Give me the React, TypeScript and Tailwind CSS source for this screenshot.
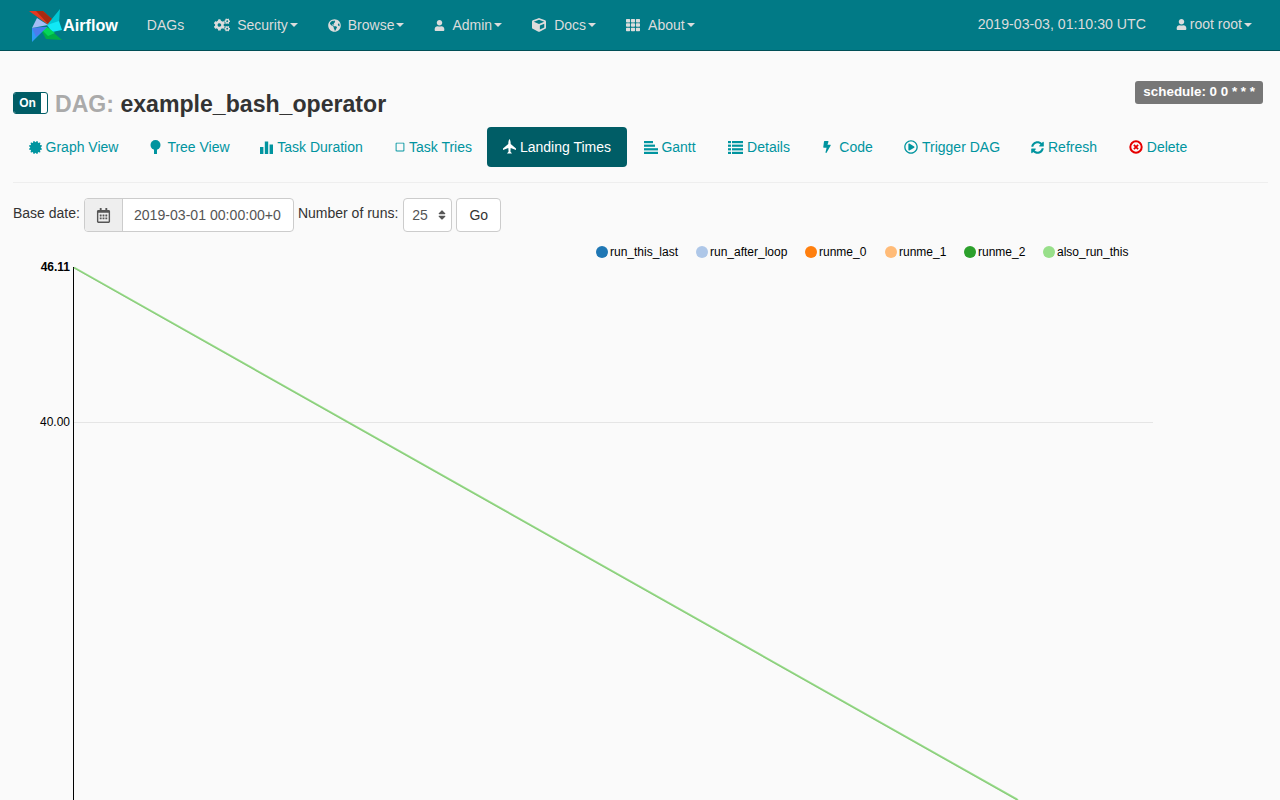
import type { ReactNode } from 'react'
import {
  FaBolt,
  FaCertificate,
  FaCogs,
  FaCube,
  FaGlobeAmericas,
  FaRegCalendarAlt,
  FaRegPlayCircle,
  FaRegSquare,
  FaSort,
  FaSyncAlt,
  FaTh,
  FaUser,
} from 'react-icons/fa'

const legend = [
  { label: 'run_this_last', color: '#1f77b4', x: 602, tx: 610 },
  { label: 'run_after_loop', color: '#aec7e8', x: 702, tx: 710 },
  { label: 'runme_0', color: '#ff7f0e', x: 811, tx: 819 },
  { label: 'runme_1', color: '#ffbb78', x: 891, tx: 899 },
  { label: 'runme_2', color: '#2ca02c', x: 970, tx: 978 },
  { label: 'also_run_this', color: '#98df8a', x: 1049, tx: 1057 },
]

function Logo() {
  return (
    <svg width="34" height="34" viewBox="0 0 34 34" className="shrink-0">
      <g transform="translate(-29,-8)">
        <path d="M29 11 L43 11 L53 20 L50 26 Z" fill="#e43921" />
        <path d="M36 11 L43 11 L53 20 L50 26 Z" fill="#a92a10" />
        <path d="M60 9 L59 23 L47 25 Z" fill="#00c7d4" />
        <path d="M59 21 L62 30 L52 32 L47 25 Z" fill="#11e8f5" />
        <path d="M62 40 L46 39 L40 28 L47 27 Z" fill="#00ad46" />
        <path d="M47 27 L55 33 L48 36 L41 29 Z" fill="#04d659" />
        <path d="M32 42 L32 28 L47 27 Z" fill="#2b9cf5" />
        <path d="M32 28 L47 27 L36 37 Z" fill="#4a7dee" />
        <path d="M37 18 L48 25 L32 28 Z" fill="#a4bdf5" />
      </g>
    </svg>
  )
}

function Caret() {
  return <span className="ml-[2px] h-0 w-0 border-x-[4px] border-t-[4px] border-x-transparent border-t-[#dcdcdc]" />
}

function NavItem({ icon, iconBox, label }: { icon: ReactNode; iconBox: string; label: string }) {
  return (
    <span className="flex items-center text-[14px] text-[#dcdcdc]">
      <span className={`flex items-center ${iconBox}`}>{icon}</span>
      {label}
      <Caret />
    </span>
  )
}

function Tab({ icon, label, active, w }: { icon: ReactNode; label: string; active?: boolean; w: string }) {
  return (
    <span
      className={`flex h-[40px] items-center justify-center rounded text-[14px] ${w} ${
        active ? 'bg-[#005d66] text-white' : 'text-[#00949f]'
      }`}
    >
      <span className="mr-[4px] flex justify-center text-[13px]">{icon}</span>
      {label}
    </span>
  )
}

function TreeIcon() {
  return (
    <svg width="13" height="14" viewBox="0 0 13 14" fill="currentColor" className="ml-[2px] mr-[1px]">
      <circle cx="6.5" cy="5" r="5" />
      <rect x="5" y="8" width="3" height="6" />
    </svg>
  )
}

function BarsIcon() {
  return (
    <svg width="13" height="13" viewBox="0 0 13 13" fill="currentColor">
      <rect x="0" y="6" width="3.4" height="7" />
      <rect x="4.8" y="0.5" width="3.4" height="12.5" />
      <rect x="9.6" y="3.5" width="3.4" height="9.5" />
    </svg>
  )
}

function PlaneIcon() {
  return (
    <svg width="13" height="15" viewBox="0 0 13 15" fill="currentColor" className="mb-[2px]">
      <path d="M6.5 0 C7.4 1 7.7 3 7.7 5 L13 9.5 V11 L7.7 9 L7.4 12.5 L9 14.5 H4 L5.6 12.5 L5.3 9 L0 11 V9.5 L5.3 5 C5.3 3 5.6 1 6.5 0 Z" />
    </svg>
  )
}

function GanttIcon() {
  return (
    <svg width="14" height="13" viewBox="0 0 14 13" fill="currentColor" className="mr-[-1px]">
      <rect x="0" y="0" width="9" height="2.2" />
      <rect x="0" y="3.6" width="11" height="2.2" />
      <rect x="0" y="7.2" width="14" height="2.2" />
      <rect x="0" y="10.8" width="14" height="2.2" />
    </svg>
  )
}

function DetailsIcon() {
  return (
    <svg width="15" height="13" viewBox="0 0 15 13" fill="currentColor">
      {[0, 3.6, 7.2, 10.8].map((y) => (
        <g key={y}>
          <rect x="0" y={y} width="3" height="2.2" />
          <rect x="4" y={y} width="11" height="2.2" />
        </g>
      ))}
    </svg>
  )
}

function DeleteIcon() {
  return (
    <svg width="14" height="14" viewBox="0 0 14 14" fill="none" stroke="#e60000">
      <circle cx="7" cy="7" r="5.7" strokeWidth="2" />
      <path d="M4.9 4.9 L9.1 9.1 M9.1 4.9 L4.9 9.1" strokeWidth="1.8" />
    </svg>
  )
}

export default function App() {
  return (
    <div className="flex h-screen flex-col overflow-hidden bg-[#fafafa] font-['Liberation_Sans',Arial,sans-serif] text-[14px] text-[#333]">
      <nav className="flex h-[51px] shrink-0 items-center border-b border-[#004f57] bg-[#017a86] pl-[29px] pr-[28px]">
        <Logo />
        <span className="text-[16.2px] font-bold text-white">Airflow</span>
        <span className="ml-[29px] mr-[30px] text-[14px] text-[#dcdcdc]">DAGs</span>
        <div className="flex items-center gap-[30px]">
          <NavItem iconBox="w-[23px]" icon={<FaCogs className="text-[16px]" />} label="Security" />
          <NavItem iconBox="w-[20px]" icon={<FaGlobeAmericas className="text-[13px]" />} label="Browse" />
          <NavItem iconBox="w-[18px]" icon={<FaUser className="text-[11px]" />} label="Admin" />
          <NavItem iconBox="w-[22px]" icon={<FaCube className="text-[14px]" />} label="Docs" />
          <NavItem iconBox="w-[22px]" icon={<FaTh className="text-[14px]" />} label="About" />
        </div>
        <div className="ml-auto flex items-center gap-[30px]">
          <span className="text-[14.15px] text-[#dcdcdc]">2019-03-03, 01:10:30 UTC</span>
          <span className="flex items-center text-[14px] text-[#dcdcdc]">
            <span className="flex w-[14px] items-center">
              <FaUser className="text-[11px]" />
            </span>
            root root
            <Caret />
          </span>
        </div>
      </nav>

      <main className="flex min-h-0 flex-1 flex-col pl-[13px] pr-[12px]">
        <div className="relative mt-[28px] flex h-[39px] shrink-0 items-end pt-[29px]">
          <div className="mb-[4px] flex h-[22px] w-[35px] overflow-hidden rounded-[3px] border border-[#005d66] bg-white">
            <span className="flex w-[27px] items-center justify-center bg-[#005d66] text-[12px] font-bold text-white">
              On
            </span>
          </div>
          <h4 className="mb-[1px] ml-[7px] text-[23.1px] font-bold leading-[26px]">
            <span className="text-[#aaa]">DAG:</span> example_bash_operator
          </h4>
          <span className="absolute right-[5px] top-[2px] flex h-[23px] items-center rounded-[3px] bg-[#777] px-[8px] text-[13.4px] font-bold text-white">
            schedule: 0 0 * * *
          </span>
        </div>

        <div className="mt-[9px] flex h-[56px] shrink-0 items-start border-b border-[#eee]">
          <Tab w="w-[121px]" icon={<FaCertificate />} label="Graph View" />
          <Tab w="w-[109px]" icon={<TreeIcon />} label="Tree View" />
          <Tab w="w-[137px]" icon={<BarsIcon />} label="Task Duration" />
          <Tab w="w-[107px]" icon={<FaRegSquare className="text-[10px]" />} label="Task Tries" />
          <Tab w="w-[140px]" icon={<PlaneIcon />} label="Landing Times" active />
          <Tab w="w-[86px]" icon={<GanttIcon />} label="Gantt" />
          <Tab w="w-[92px]" icon={<DetailsIcon />} label="Details" />
          <Tab w="w-[84px]" icon={<FaBolt className="mr-[2px] text-[12px]" />} label="Code" />
          <Tab w="w-[126px]" icon={<FaRegPlayCircle className="text-[14px]" />} label="Trigger DAG" />
          <Tab w="w-[98px]" icon={<FaSyncAlt />} label="Refresh" />
          <Tab w="w-[90px]" icon={<DeleteIcon />} label="Delete" />
        </div>

        <div className="mt-[15px] flex h-[34px] shrink-0 items-center">
          <span className="mb-[3px] mr-[4px]">Base date:</span>
          <div className="flex h-[34px] w-[210px] overflow-hidden rounded border border-[#ccc] bg-white">
            <span className="flex w-[38px] shrink-0 items-center justify-center border-r border-[#ccc] bg-[#eee] text-[15px] text-[#555]">
              <FaRegCalendarAlt />
            </span>
            <span className="min-w-0 flex-1 pl-[11px] pr-[12px]">
              <span className="block overflow-hidden whitespace-nowrap text-[14.1px] leading-[32px] text-[#555]">
                2019-03-01 00:00:00+0
              </span>
            </span>
          </div>
          <span className="mb-[3px] ml-[4px] mr-[5px]">Number of runs:</span>
          <div className="flex h-[34px] w-[49px] items-center justify-between rounded border border-[#ccc] bg-white pl-[8px] pr-[3px] text-[#555]">
            25
            <FaSort className="text-[12px]" />
          </div>
          <span className="ml-[4px] flex h-[34px] w-[45px] items-center justify-center rounded border border-[#ccc] bg-white text-[#333]">
            Go
          </span>
        </div>

        <svg viewBox="0 0 1280 565" className="ml-[-13px] mt-[3px] h-[565px] w-[1280px] shrink-0">
          <g transform="translate(0,-235)" fontFamily="Liberation Sans, Arial, sans-serif" fontSize="12">
            {legend.map((l) => (
              <g key={l.label}>
                <circle cx={l.x} cy="252" r="6" fill={l.color} />
                <text x={l.tx} y="256" fill="#000">
                  {l.label}
                </text>
              </g>
            ))}
            <line x1="74" y1="422.5" x2="1153" y2="422.5" stroke="#e5e5e5" />
            <line x1="73.5" y1="267" x2="73.5" y2="800" stroke="#000" />
            <text x="70" y="271" textAnchor="end" fontWeight="bold" fill="#000">
              46.11
            </text>
            <text x="70" y="426" textAnchor="end" fill="#000">
              40.00
            </text>
            <line x1="74" y1="267.5" x2="1018" y2="800" stroke="#98df8a" strokeWidth="2" />
            <line x1="74" y1="268" x2="1018" y2="800.5" stroke="#7fb56f" strokeWidth="0.6" />
          </g>
        </svg>
      </main>
    </div>
  )
}
